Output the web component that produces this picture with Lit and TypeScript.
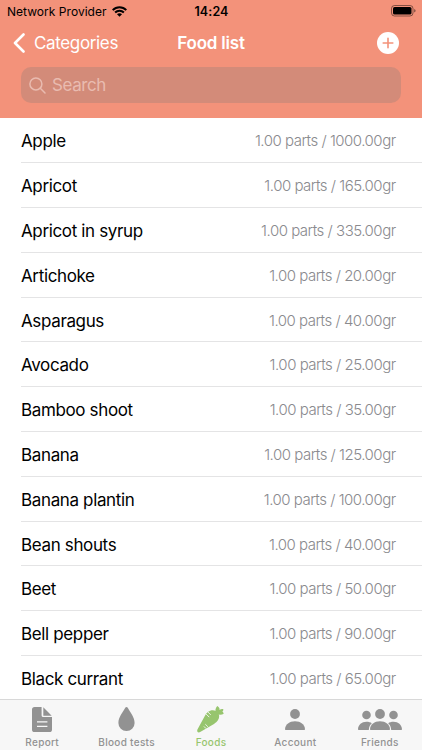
import { LitElement, html, css, svg } from "lit";
import { customElement } from "lit/decorators.js";
import { classMap } from "lit/directives/class-map.js";

const foods: [string, string][] = [
  ["Apple", "1000.00"],
  ["Apricot", "165.00"],
  ["Apricot in syrup", "335.00"],
  ["Artichoke", "20.00"],
  ["Asparagus", "40.00"],
  ["Avocado", "25.00"],
  ["Bamboo shoot", "35.00"],
  ["Banana", "125.00"],
  ["Banana plantin", "100.00"],
  ["Bean shouts", "40.00"],
  ["Beet", "50.00"],
  ["Bell pepper", "90.00"],
  ["Black currant", "65.00"],
];

const person = svg`<circle cx="10" cy="5" r="4.900"/><path d="M0 20.300C.2 15.500 4.500 12.300 10 12.300s9.800 3.200 10 8q0 .7-.7.7H.7Q0 21 0 20.300Z"/>`;

const tabs = [
  {
    label: "Report",
    icon: html`<svg width="20" height="25" viewBox="0 0 20 25" fill="currentColor">
      <path fill-rule="evenodd" d="M2.600 0H9.600V8.400Q9.600 10 11.200 10H20V22.400Q20 25 17.400 25H2.600Q0 25 0 22.400V2.600Q0 0 2.600 0ZM5 14.200V15.500H15.400V14.200ZM5 18.800V20.100H15.400V18.800Z"/>
      <path d="M11.300.3 19.700 8.700H11.300Z"/></svg>`,
  },
  {
    label: "Blood tests",
    icon: html`<svg width="17" height="24" viewBox="0 0 17 24" fill="currentColor">
      <path d="M8.500 0C9.100 0 9.500.4 9.900 1.100C12.400 5.700 16.600 10.500 16.600 15.900A8.100 8.100 0 0 1 .4 15.900C.4 10.500 4.600 5.700 7.100 1.100C7.500.4 7.900 0 8.500 0Z"/></svg>`,
  },
  {
    label: "Foods",
    icon: html`<svg width="27" height="27" viewBox="0 0 27 27" fill="currentColor">
      <path d="M.6 26C0 25.400.1 24.200.7 23.100L8.200 9.300C9.300 7 11 5.300 13.200 4.700C16.200 3.800 19 4.500 20.600 6.300C22.600 8.400 22.700 11.700 20.900 14.300C20 15.700 18.600 16.900 17 17.900L3.600 25.800C2.500 26.400 1.300 26.700.6 26Z"/>
      <path d="M19.400 7.300C17.700 4.800 18.400 2 20.200 0C22.400 1.300 22.900 2.700 22.500 4.100C23.600 3.300 25 2.800 26.300 3.300C26.600 4.300 26 5.100 25.300 5.700C26.100 6.100 26.600 6.900 26.700 7.800C24.300 9.300 21.700 9.100 19.400 7.300Z"/>
      <path d="M10.900 6 13.500 8.600M9.300 8.200 12 10.900M8.600 18.500 10.600 20.500M7.200 20.700 8.800 22.300" fill="none" stroke="#f7f7f7" stroke-width=".9" stroke-linecap="round"/></svg>`,
  },
  {
    label: "Account",
    icon: html`<svg width="20" height="21" viewBox="0 0 20 21" fill="currentColor">${person}</svg>`,
  },
  {
    label: "Friends",
    icon: html`<svg width="44" height="21" viewBox="0 0 44 21" fill="currentColor">
      <circle cx="8.500" cy="6" r="4.300"/><circle cx="35.500" cy="6" r="4.300"/>
      <path d="M0 20.200C.2 15.800 3.700 12.800 8.500 12.800c2.300 0 4 .5 5.300 1.500-1.800 1.400-2.800 3.400-3 6.700H.7Q0 21 0 20.200ZM44 20.200C43.800 15.800 40.300 12.800 35.500 12.800c-2.300 0-4 .5-5.300 1.500 1.800 1.400 2.800 3.400 3 6.700H43.300Q44 21 44 20.200Z"/>
      <g transform="translate(12)">${person}</g></svg>`,
  },
];

@customElement("app-root")
export class AppRoot extends LitElement {
  static styles = css`
    :host {
      display: flex;
      flex-direction: column;
      height: 750px;
      overflow: hidden;
      background: #fff;
      font-family: Inter, "Liberation Sans", sans-serif;
      color: #000;
    }
    svg { display: block; flex: none; }
    .header {
      flex: none;
      height: 118.400px;
      background: #f3927a;
    }
    .status {
      display: grid;
      grid-template-columns: 1fr auto 1fr;
      align-items: center;
      height: 22px;
      padding: 0 6px 0 7px;
      font-size: 12px;
    }
    .carrier { display: flex; align-items: center; gap: 5px; letter-spacing: 0.03px; }
    .time { font-weight: 600; font-size: 12.500px; letter-spacing: 0.1px; }
    .battery { justify-self: end; }
    .nav {
      display: grid;
      grid-template-columns: 1fr auto 1fr;
      align-items: center;
      height: 42px;
      padding: 0 23px 0 13px;
      color: #fff;
      font-size: 17px;
    }
    .back { display: flex; align-items: center; gap: 9px; letter-spacing: -0.35px; }
    .title { font-weight: 600; font-size: 17px; letter-spacing: -0.2px; padding-left: 10px; }
    .add { justify-self: end; }
    .search {
      display: flex;
      align-items: center;
      gap: 6px;
      height: 36px;
      margin: 3px 21px 0;
      padding-left: 8px;
      box-sizing: border-box;
      border-radius: 10px;
      background: #d38b79;
      color: #e9bbb0;
      font-size: 17px;
      letter-spacing: -0.4px;
    }
    .list { flex: 1; min-height: 0; overflow: hidden; }
    .row {
      display: flex;
      align-items: center;
      justify-content: space-between;
      box-sizing: border-box;
      height: 44.800px;
      margin-left: 21px;
      padding: 2.400px 26px 0 0;
      border-bottom: 1px solid #e4e4e5;
    }
    .name { font-size: 17px; letter-spacing: -0.36px; }
    .amount { font-size: 15px; line-height: 19px; padding-bottom: 1px; font-weight: 300; letter-spacing: -0.49px; color: #8a8a8e; margin-right: 0.400px; }
    .tabs {
      flex: none;
      display: grid;
      grid-template-columns: repeat(5, 1fr);
      box-sizing: border-box;
      height: 51px;
      border-top: 1px solid #d8d8d8;
      background: #f7f7f7;
      color: #929292;
    }
    .tab { display: flex; flex-direction: column; align-items: center; }
    .tab.active { color: #97c56e; }
    .icon { display: flex; align-items: center; box-sizing: border-box; height: 36px; padding-top: 2px; }
    .label { font-size: 10px; line-height: 12px; font-weight: 500; letter-spacing: 0.3px; }
  `;

  render() {
    return html`
      <div class="header">
        <div class="status">
          <div class="carrier">
            <span>Network Provider</span>
            <svg width="15" height="11" viewBox="0 0 15 11" fill="none" stroke="#000" stroke-width="2">
              <path d="M.7 4.100C4.500.2 10.500.2 14.300 4.100M3.100 6.500C5.600 4 9.400 4 11.900 6.500"/>
              <path d="M5 8.200C6.400 6.900 8.600 6.900 10 8.200L7.500 10.800Z" fill="#000" stroke="none"/>
            </svg>
          </div>
          <div class="time">14:24</div>
          <svg class="battery" width="25" height="12" viewBox="0 0 25 12">
            <rect x=".5" y=".5" width="21.500" height="10.500" rx="3" fill="none" stroke="#000" stroke-opacity=".45"/>
            <rect x="2" y="2" width="18.500" height="7.500" rx="1.600"/>
            <path d="M23.200 4Q24.600 4.500 24.600 5.800T23.200 7.600Z" fill-opacity=".5"/>
          </svg>
        </div>
        <div class="nav">
          <div class="back">
            <svg width="12" height="20" viewBox="0 0 12 20" fill="none" stroke="#fff" stroke-width="2.600" stroke-linecap="round" stroke-linejoin="round">
              <path d="M10.500 1.500 2 10 10.500 18.500"/>
            </svg>
            <span>Categories</span>
          </div>
          <div class="title">Food list</div>
          <svg class="add" width="22" height="22" viewBox="0 0 22 22">
            <circle cx="11" cy="11" r="11" fill="#fff"/>
            <path d="M11 6.200V15.800M6.200 11H15.800" stroke="#f3927a" stroke-width="1.600" stroke-linecap="round"/>
          </svg>
        </div>
        <div class="search">
          <svg width="17" height="17" viewBox="0 0 17 17" fill="none" stroke="currentColor" stroke-width="1.500" stroke-linecap="round">
            <circle cx="6.900" cy="6.900" r="6"/><path d="M11.300 11.300 16 16"/>
          </svg>
          <span>Search</span>
        </div>
      </div>
      <div class="list">
        ${foods.map(
          ([name, grams]) => html`<div class="row">
            <span class="name">${name}</span>
            <span class="amount">1.00 parts / ${grams}gr</span>
          </div>`
        )}
      </div>
      <div class="tabs">
        ${tabs.map(
          (tab) => html`<div class=${classMap({ tab: true, active: tab.label === "Foods" })}>
            <div class="icon">${tab.icon}</div>
            <div class="label">${tab.label}</div>
          </div>`
        )}
      </div>
    `;
  }
}
